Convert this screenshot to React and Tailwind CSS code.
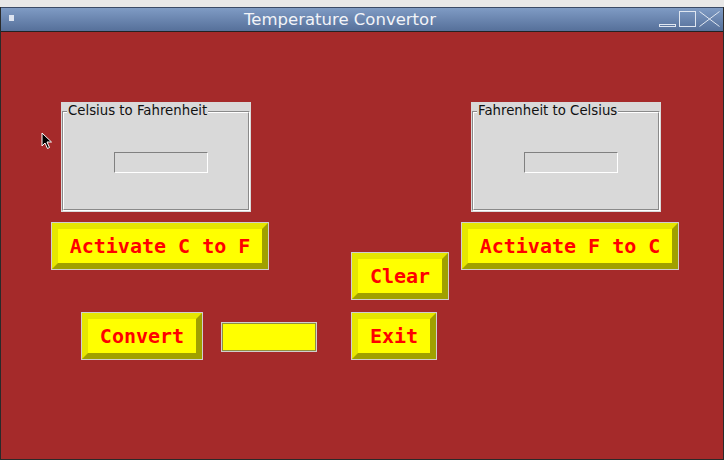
import React from "react";

function Bevel({ w, label, className = "" }) {
  return (
    <div
      className={`h-[48px] border border-[#cfcfcf] ${className}`}
      style={{ width: w }}
    >
      <div className="flex h-full w-full items-center justify-center border-[6px] border-t-[#e6e600] border-l-[#e6e600] border-b-[#a0a000] border-r-[#a0a000] bg-[#ffff00]">
        <span className="font-['DejaVu_Sans_Mono',monospace] text-[20px] font-bold leading-none text-[#ff0000] whitespace-pre">
          {label}
        </span>
      </div>
    </div>
  );
}

function LabelFrame({ title }) {
  return (
    <div className="relative h-[110px] w-[190px] bg-[#d9d9d9]">
      <div className="absolute left-[1px] right-[1px] top-[9px] bottom-[1px] border border-t-[#8a8a8a] border-l-[#8a8a8a] border-b-white border-r-white">
        <div className="h-full w-full border border-t-white border-l-white border-b-[#8a8a8a] border-r-[#8a8a8a]" />
      </div>
      <span className="absolute left-[6px] top-[0px] bg-[#d9d9d9] px-[1px] font-['DejaVu_Sans',sans-serif] text-[13.3px] leading-[17px] text-[#111]">
        {title}
      </span>
      <div className="absolute left-[53px] top-[50px] h-[21px] w-[94px] border border-t-[#808080] border-l-[#808080] border-b-white border-r-white" />
    </div>
  );
}

export default function App() {
  return (
    <div className="relative h-[460px] w-[724px] overflow-hidden bg-[#e8e8e8] font-['DejaVu_Sans',sans-serif]">
      <div className="mt-[7px] flex h-[453px] flex-col border-x border-b border-[#2a2a2a]">
        {/* title bar */}
        <div className="relative flex h-[24px] items-center justify-center border-t border-[#3a4a66] bg-gradient-to-b from-[#7f9bc4] to-[#56709a] pr-[44px] pt-[2px]">
          <div className="absolute left-[8px] top-[7px] h-[6px] w-[5px] bg-[#dde4f0]" />
          <span className="text-[16.5px] leading-none text-[#f2f4f8]">Temperature Convertor</span>
          <div className="absolute right-[47px] top-[16px] h-[3px] w-[17px] border border-[#dfe6f0]" />
          <div className="absolute right-[27px] top-[3px] h-[16px] w-[17px] border border-[#dfe6f0]" />
          <svg className="absolute right-[3px] top-[3px]" width="21" height="16" viewBox="0 0 21 16">
            <path d="M0.5 0.5 L20.5 15.5 M20.5 0.5 L0.5 15.5" stroke="#dfe6f0" strokeWidth="1" fill="none" />
          </svg>
        </div>
        {/* content */}
        <div className="relative flex-1 border-t border-[#222] bg-[#a52a2a] pt-[70px]">
          <div className="flex">
            <div className="ml-[60px]">
              <LabelFrame title="Celsius to Fahrenheit" />
            </div>
            <div className="ml-[220px]">
              <LabelFrame title="Fahrenheit to Celsius" />
            </div>
          </div>
          <div className="mt-[10px] flex items-start">
            <div className="ml-[50px] w-[300px]">
              <Bevel w={218} label="Activate C to F" />
              <div className="ml-[30px] mt-[42px] flex items-start">
                <Bevel w={122} label="Convert" />
                <div className="ml-[18px] mt-[10px] h-[30px] w-[96px] border border-[#cfcfcf]">
                  <div className="h-full w-full border border-[#8f8f40] bg-[#ffff00]" />
                </div>
              </div>
            </div>
            <div className="w-[110px] pt-[30px]">
              <Bevel w={98} label="Clear" />
              <Bevel w={86} label="Exit" className="mt-[12px]" />
            </div>
            <div>
              <Bevel w={218} label="Activate F to C" />
            </div>
          </div>
          {/* mouse pointer */}
          <svg className="absolute left-[40px] top-[100px]" width="12" height="18" viewBox="0 0 12 18">
            <path d="M1 1 L1 14 L4 11 L6.5 16.5 L8.5 15.5 L6 10 L10.5 10 Z" fill="#000" stroke="#fff" strokeWidth="1" />
          </svg>
        </div>
      </div>
    </div>
  );
}
